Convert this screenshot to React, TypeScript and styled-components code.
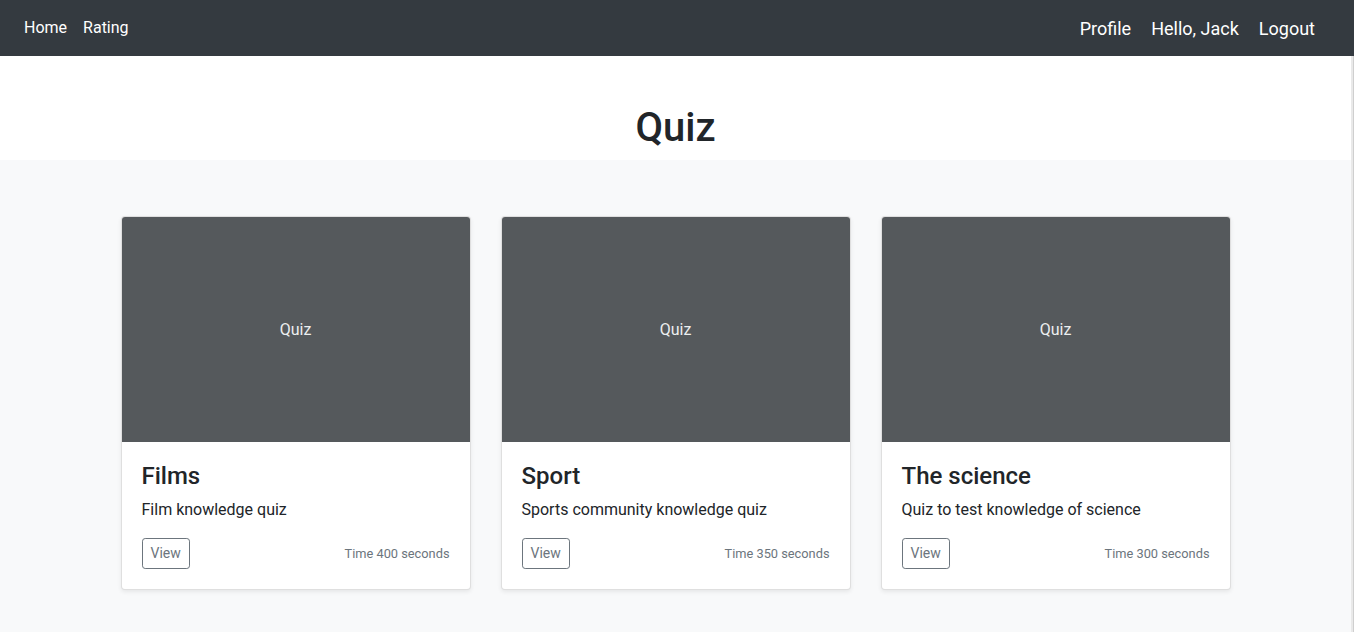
import React from "react";
import styled, { createGlobalStyle } from "styled-components";

const GlobalStyle = createGlobalStyle`
  *, *::before, *::after { box-sizing: border-box; }
  html, body { margin: 0; padding: 0; height: 100%; overflow: hidden; }
  body {
    font-family: Roboto, "Liberation Sans", Arial, sans-serif;
    font-size: 16px;
    line-height: 1.5;
    color: #212529;
    background: #fff;
  }
  #root { height: 100%; }
`;

const Shell = styled.div`
  display: flex;
  flex-direction: column;
  height: 100vh;
`;

const NavBar = styled.nav`
  flex-shrink: 0;
  height: 56px;
  background: #343a40;
  display: flex;
  align-items: center;
  justify-content: space-between;
  padding: 0 16px;
`;

const NavGroup = styled.div<{ $right?: boolean }>`
  display: flex;
  align-items: center;
  margin-right: ${(p) => (p.$right ? "13px" : "0")};
  margin-top: ${(p) => (p.$right ? "1px" : "-1px")};
`;

const NavLink = styled.a<{ $large?: boolean }>`
  color: #fff;
  text-decoration: none;
  font-size: ${(p) => (p.$large ? "18px" : "16px")};
  line-height: ${(p) => (p.$large ? "27px" : "24px")};
  padding: 0 ${(p) => (p.$large ? "10px" : "8px")};
  cursor: pointer;
`;

const Viewport = styled.div`
  flex: 1;
  min-height: 0;
  display: flex;
`;

const Main = styled.main`
  flex: 1;
  min-width: 0;
  overflow: hidden;
`;

const ScrollRail = styled.div`
  width: 3px;
  flex-shrink: 0;
  background: #e9e9e9;
  border-right: 1px solid #cfcfcf;
`;

const Hero = styled.section`
  background: #fff;
  text-align: center;
  padding-top: 48px;
`;

const HeroTitle = styled.h1`
  margin: 0 0 8px;
  font-size: 40px;
  font-weight: 500;
  line-height: 1.2;
  color: #212529;
`;

const Album = styled.section`
  background: #f8f9fa;
  padding: 56px 0 48px;
`;

const Grid = styled.div`
  width: 1110px;
  margin: 0 auto;
  display: grid;
  grid-template-columns: repeat(3, 1fr);
  column-gap: 30px;
`;

const Card = styled.div`
  background: #fff;
  border: 1px solid rgba(0, 0, 0, 0.125);
  border-radius: 4px;
  box-shadow: 0 2px 4px rgba(0, 0, 0, 0.075);
  overflow: hidden;
  margin-bottom: 24px;
  display: flex;
  flex-direction: column;
`;

const Thumb = styled.div`
  height: 225px;
  background: #55595c;
  color: #eceeef;
  display: flex;
  align-items: center;
  justify-content: center;
  font-size: 16px;
  line-height: 24px;
`;

const CardBody = styled.div`
  padding: 20px;
`;

const CardTitle = styled.h4`
  margin: 0 0 7px;
  font-size: 24px;
  font-weight: 500;
  line-height: 1.2;
  color: #212529;
`;

const CardText = styled.p`
  margin: 0 0 16px;
  font-size: 16px;
  line-height: 24px;
`;

const Footer = styled.div`
  display: flex;
  justify-content: space-between;
  align-items: center;
`;

const ViewButton = styled.button`
  font-family: inherit;
  font-size: 14px;
  line-height: 21px;
  padding: 4px 8px;
  color: #6c757d;
  background: transparent;
  border: 1px solid #6c757d;
  border-radius: 3.2px;
  cursor: pointer;
`;

const Muted = styled.small`
  font-size: 12.8px;
  color: #6c757d;
`;

const quizzes = [
  { title: "Films", text: "Film knowledge quiz", time: 400 },
  { title: "Sport", text: "Sports community knowledge quiz", time: 350 },
  { title: "The science", text: "Quiz to test knowledge of science", time: 300 },
];

export default function App() {
  return (
    <>
      <GlobalStyle />
      <Shell>
        <NavBar>
          <NavGroup>
            <NavLink>Home</NavLink>
            <NavLink>Rating</NavLink>
          </NavGroup>
          <NavGroup $right>
            <NavLink $large>Profile</NavLink>
            <NavLink $large>Hello, Jack</NavLink>
            <NavLink $large>Logout</NavLink>
          </NavGroup>
        </NavBar>
        <Viewport>
          <Main>
            <Hero>
              <HeroTitle>Quiz</HeroTitle>
            </Hero>
            <Album>
              <Grid>
                {quizzes.map((q) => (
                  <Card key={q.title}>
                    <Thumb>Quiz</Thumb>
                    <CardBody>
                      <CardTitle>{q.title}</CardTitle>
                      <CardText>{q.text}</CardText>
                      <Footer>
                        <ViewButton type="button">View</ViewButton>
                        <Muted>Time {q.time} seconds</Muted>
                      </Footer>
                    </CardBody>
                  </Card>
                ))}
              </Grid>
            </Album>
          </Main>
          <ScrollRail />
        </Viewport>
      </Shell>
    </>
  );
}
